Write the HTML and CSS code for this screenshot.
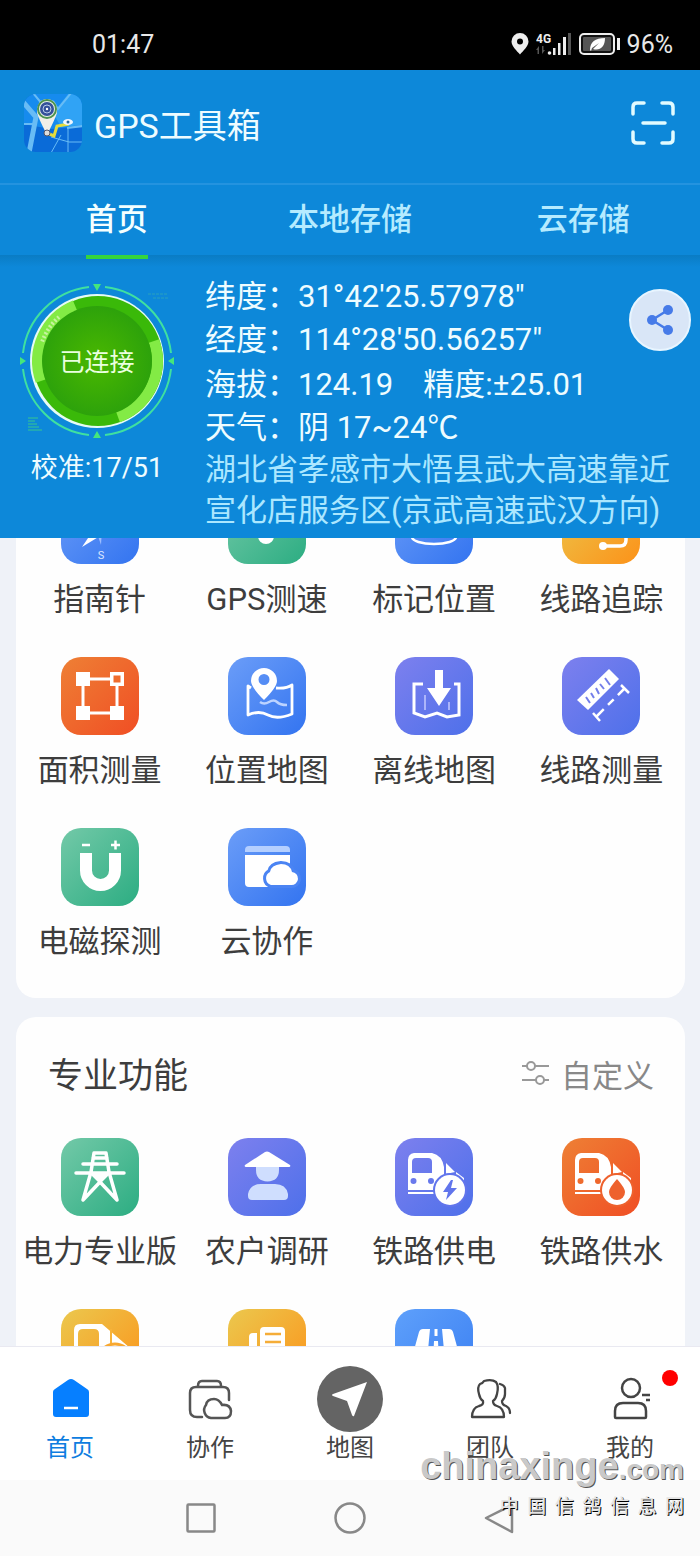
FILE: index.html
```html
<!DOCTYPE html>
<html lang="zh-CN">
<head>
<meta charset="utf-8">
<meta name="viewport" content="width=device-width, initial-scale=1">
<title>GPS工具箱</title>
<link rel="stylesheet" href="styles.css">
</head>
<body>
<div class="status">
  <time class="status-time">01:47</time>
  <div class="status-icons">
    <svg width="18" height="22" viewBox="0 0 18 22"><path fill="#eee" fill-rule="evenodd" d="M9 0a8.500 8.500 0 0 1 8.500 8.500C17.500 13 12 18 9 21.500 6 18 .5 13 .5 8.500A8.500 8.500 0 0 1 9 0zm0 5.500a3 3 0 1 0 0 6 3 3 0 0 0 0-6z"/></svg>
    <svg width="36" height="26" viewBox="0 0 36 26"><text class="net" x="0" y="12">4G</text><g fill="#555"><path d="M3 15v8H1.500v-4H0zM6 23v-8h1.500v4H9z"/><path d="M32 2h3v22h-3z"/></g><g fill="#eee"><circle cx="13.500" cy="22" r="1.800"/><path d="M17 17h2.500v7H17zM22 12h2.500v12H22zM27 6h3v18h-3z"/></g></svg>
    <svg width="41" height="22" viewBox="0 0 41 22"><rect x="1" y="1" width="34" height="20" rx="4" fill="#111" stroke="#eee" stroke-width="2"/><rect x="4" y="4" width="28" height="14" rx="1" fill="#555"/><path fill="#fff" d="M11 17c0-8 5-12 15-12 0 9-5 13-12 11l6-6-7 5-1 3z"/><path d="M38 5h3v12h-3z" fill="#eee"/></svg>
    <span>96%</span>
  </div>
</div>

<header class="top">
  <div class="title-bar">
    <svg class="logo" width="60" height="60" viewBox="0 0 60 60">
      <defs><clipPath id="logo-clip"><rect x="1" y="1" width="58" height="58" rx="12"/></clipPath></defs>
      <g clip-path="url(#logo-clip)">
        <path fill="#0a6bd8" d="M0 0h60v60H0z"/><path fill="#168bee" d="M0 0h60v33L28 36 0 31z"/><path fill="#30a3f5" d="M30 20 46 0h14v32l-22 2z"/>
        <g fill="none" stroke="#68bcf5"><path stroke-width="5" d="M0 9 13 24 6 60"/><path stroke-width="2" d="M10 0 20 12M30 8l5 8L48 0M0 31h13M44 35l16-2"/><path stroke-width="1" d="M45 35v25M38 42l-10 18M28 44l18 5 14 0"/></g>
        <path fill="none" stroke="#e5dc3c" stroke-width="3" d="M24 40l7 3 3-10 12-2"/>
        <ellipse cx="45" cy="29" rx="5" ry="3" fill="#eef6ff"/><circle cx="45" cy="29" r="1.500" fill="#2868a0"/>
        <path fill="#f0efe8" d="M14 20q0-14 10-14t10 14q-2 6-8 18h-4q-6-12-8-18z"/>
        <circle cx="24" cy="40" r="3" fill="#ddd" stroke="#556" stroke-width="1"/>
        <circle cx="24" cy="16" r="9" fill="#e7efe4" stroke="#4d9350" stroke-width="2"/><circle cx="24" cy="16" r="7" fill="#34519a"/><circle cx="24" cy="16" r="4" fill="none" stroke="#b8cbe9"/><circle cx="24" cy="16" r="1.200" fill="#fff"/>
      </g>
    </svg>
    <h1 class="app-name">GPS工具箱</h1>
    <button class="scan" aria-label="扫一扫"><svg width="44" height="44" viewBox="0 0 44 44" fill="none" stroke="#e2fbff" stroke-width="3.500" stroke-linecap="round" stroke-linejoin="round"><path d="M2 13V6q0-4 4-4h7M31 2h7q4 0 4 4v7M42 31v7q0 4-4 4h-7M13 42H6q-4 0-4-4v-7M12 22h22"/></svg></button>
  </div>
  <nav class="tabs">
    <a class="tab tab-on" href="#home">首页</a>
    <a class="tab" href="#local">本地存储</a>
    <a class="tab" href="#cloud">云存储</a>
  </nav>
  <section class="info">
    <div class="dial">
      <svg width="160" height="160" viewBox="0 0 160 160">
        <defs><radialGradient id="dial-fill"><stop offset="0" stop-color="#4ab800"/><stop offset="1" stop-color="#2da20b"/></radialGradient></defs>
        <g fill="none" stroke="#3fe0a0" stroke-width="2"><path d="M88 6A75 75 0 0 1 154 72M154 88A75 75 0 0 1 88 154M72 154A75 75 0 0 1 6 88M6 72A75 75 0 0 1 72 6"/></g>
        <path fill="#45e67c" d="M76 3h8l-4 7zM76 157h8l-4-7zM3 76v8l6-4zM157 76v8l-6-4z"/>
        <circle cx="80" cy="80" r="67" fill="#e6fbf5"/><circle cx="81" cy="80" r="65" fill="#3ab909"/>
        <g fill="none" stroke="#83eb45" stroke-width="11"><path d="M58 24.500A60 60 0 0 0 24 100"/><path d="M137 60A60 60 0 0 1 101 136"/></g>
        <path fill="none" stroke="#c7f3a0" stroke-width="4" stroke-dasharray="2 2" d="M42 36A60 60 0 0 0 25 61"/>
        <circle cx="80" cy="80" r="55" fill="url(#dial-fill)"/>
        <path stroke="#37c78f" d="M11 137h10M11 140h7M11 143h9M11 146h11M11 149h14" />
        <path stroke="#2ba1bd" stroke-dasharray="3 1" d="M131 13h20M136 17h15"/>
        <text class="dial-text" x="80" y="90" text-anchor="middle">已连接</text>
      </svg>
      <p class="calib">校准:17/51</p>
    </div>
    <div class="readings">
      <dl class="pair"><dt>纬度：</dt><dd>31°42′25.57978″</dd></dl>
      <dl class="pair"><dt>经度：</dt><dd>114°28′50.56257″</dd></dl>
      <dl class="pair pair-gap"><dt>海拔：</dt><dd>124.19</dd><dt class="second">精度:</dt><dd>±25.01</dd></dl>
      <dl class="pair"><dt>天气：</dt><dd>阴 17~24℃</dd></dl>
      <p class="address">湖北省孝感市大悟县武大高速靠近宣化店服务区(京武高速武汉方向)</p>
    </div>
    <button class="share" aria-label="分享"><svg width="28" height="30" viewBox="0 0 28 30" fill="#467be8"><path d="M22 5 6 15l16 10" fill="none" stroke="#467be8" stroke-width="2.500"/><circle cx="22" cy="5" r="5"/><circle cx="6" cy="15" r="5"/><circle cx="22" cy="25" r="5"/></svg></button>
  </section>
</header>

<main class="content">
  <section class="card card-scrolled">
    <div class="grid">
      <a class="tile" href="#compass"><svg class="ico blue" viewBox="0 0 78 78"><path fill="#fff" d="M21 61 50 18 39 50z"/><path fill="#9dbdff" d="M37 50l4-6-1 15z"/><text class="compass-s" x="40" y="73" text-anchor="middle">S</text></svg>指南针</a>
      <a class="tile" href="#speed"><svg class="ico green" viewBox="0 0 78 78"><circle cx="38" cy="50" r="8" fill="#fff"/></svg>GPS测速</a>
      <a class="tile" href="#mark"><svg class="ico blue" viewBox="0 0 78 78"><ellipse cx="39" cy="51" rx="22" ry="7" fill="none" stroke="#fff" stroke-width="2.500"/></svg>标记位置</a>
      <a class="tile" href="#track"><svg class="ico yellow" viewBox="0 0 78 78"><circle cx="41" cy="60" r="4" fill="#fff"/><path d="M41 60h17q6 0 6-6V40" fill="none" stroke="#fff" stroke-width="3.500"/></svg>线路追踪</a>

      <a class="tile" href="#area"><svg class="ico orange" viewBox="0 0 78 78"><path d="M22 22h34v34H22z" fill="none" stroke="#fff" stroke-width="3"/><path fill="#fff" d="M15 15h14v14H15zM15 49h14v14H15zM49 49h14v14H49zM49 15h14v14H49z"/><path fill="#ef6b2c" d="M52.500 18.500h7v7h-7z"/></svg>面积测量</a>
      <a class="tile" href="#map"><svg class="ico blue" viewBox="0 0 78 78"><path fill="none" stroke="#fff" stroke-width="2.800" stroke-linejoin="round" d="M23 31l-3-2v29q11-5 20 0t24-1V28q-6 4-16 3"/><path fill="#fff" fill-rule="evenodd" d="M36 11a13 13 0 0 1 13 13q0 6-13 19-13-13-13-19a13 13 0 0 1 13-13zm0 6a5.500 5.500 0 1 0 0 11 5.500 5.500 0 0 0 0-11z"/><path d="M32 45q4 3 9 0t8 0 10 3" fill="none" stroke="#bcd3ff" stroke-width="2.500"/></svg>位置地图</a>
      <a class="tile" href="#offline"><svg class="ico violet" viewBox="0 0 78 78"><path fill="none" stroke="#fff" stroke-width="3" d="M28 27h-9v29l11 4 12-4 10 4 12-2V27h-5"/><path fill="none" stroke="#c4caff" stroke-width="1.500" d="M30 38v15M54 45v8"/><path fill="#fff" d="M40 13h8v18h8L44 49 32 31h8z"/></svg>离线地图</a>
      <a class="tile" href="#route"><svg class="ico violet" viewBox="0 0 78 78"><path fill="#fff" d="M47 12l10 10-31 31-11-10z"/><path stroke="#747fea" stroke-width="2" d="M24 40l4 6M29 36l3 5M34 31l3 6M38 27l4 5M43 21l5 7"/><g stroke="#fff" stroke-width="2.500"><path stroke-dasharray="11 6 8 6" d="M34 60l28-28"/><path d="M31 56l7 8M59 28l8 8"/></g></svg>线路测量</a>

      <a class="tile" href="#magnet"><svg class="ico green" viewBox="0 0 78 78"><path fill="none" stroke="#fff" stroke-width="12" d="M25 25v17.500a14.500 14.500 0 0 0 29 0V25"/><path stroke="#fff" stroke-width="2.500" d="M21 17h8M50 17h9M54.500 12.500v9"/></svg>电磁探测</a>
      <a class="tile" href="#team-cloud"><svg class="ico blue" viewBox="0 0 78 78"><path fill="#b4cfff" d="M17 24v-2q0-4 4-4h37q4 0 4 4v2z"/><path fill="#fff" d="M17 27h45v28q0 4-4 4H21q-4 0-4-4z"/><path fill="#fff" stroke="#4b84f3" stroke-width="6" paint-order="stroke" d="M43 57a7 7 0 0 1-1-13q1-7 11-8 9 0 11 8a6.500 6.500 0 0 1-1 13z"/></svg>云协作</a>
    </div>
  </section>

  <section class="card">
    <div class="card-head">
      <h2 class="card-title">专业功能</h2>
      <button class="custom"><svg class="custom-ico" width="29" height="26" viewBox="0 0 29 26" fill="none" stroke="#999" stroke-width="2"><path d="M1 6h5M14 6h14M1 20h14M23 20h5"/><circle cx="10" cy="6" r="4"/><circle cx="19" cy="20" r="4"/></svg>自定义</button>
    </div>
    <div class="grid">
      <a class="tile" href="#power"><svg class="ico green" viewBox="0 0 78 78"><g fill="none" stroke="#fff" stroke-width="3.500" stroke-linecap="round" stroke-linejoin="round"><path d="M22 62 30 34l3-19h12l3 19 8 28-17-18zM32 20h14M22 26h34M15 35h48"/></g><path fill="#fff" d="M28 35h22L39 46z"/></svg>电力专业版</a>
      <a class="tile" href="#farmer"><svg class="ico violet" viewBox="0 0 78 78"><path fill="#cfdefe" d="M28 29h23v3q0 11-11.500 11.500Q28 43 28 32zM20 58v-2q2-10 13-10h14q11 0 13 10v2q0 4-4 4H24q-4 0-4-4z"/><path fill="#fff" d="M37 14q2-1 4 0l21 13q1 2-1 2H18q-2 0-1-2z"/></svg>农户调研</a>
      <a class="tile" href="#rail-power"><svg class="ico violet" viewBox="0 0 78 78"><path fill="#fff" fill-rule="evenodd" d="M13 52V22q0-6 6-7h18q10 2 12 14v23zM17 24v11h20V24q0-4-4-4H21q-4 0-4 4zM18.500 40a3 3 0 1 0 0 6 3 3 0 0 0 0-6zM36 40a3 3 0 1 0 0 6 3 3 0 0 0 0-6zM13 54h26v2H13zM51 25l9 9-9 2zM61 34l8 6v3l-8-6z"/><circle cx="55" cy="52" r="17" fill="#6175ec"/><circle cx="55" cy="52" r="15" fill="#fff"/><path fill="#6175ec" d="M56 42 48 54h5l-2 8 11-12h-6l2-8z"/></svg>铁路供电</a>
      <a class="tile" href="#rail-water"><svg class="ico orange" viewBox="0 0 78 78"><path fill="#fff" fill-rule="evenodd" d="M13 52V22q0-6 6-7h18q10 2 12 14v23zM17 24v11h20V24q0-4-4-4H21q-4 0-4 4zM18.500 40a3 3 0 1 0 0 6 3 3 0 0 0 0-6zM36 40a3 3 0 1 0 0 6 3 3 0 0 0 0-6zM13 54h26v2H13zM51 25l9 9-9 2zM61 34l8 6v3l-8-6z"/><circle cx="55" cy="52" r="17" fill="#ee612d"/><circle cx="55" cy="52" r="15" fill="#fff"/><path fill="#ee612d" d="M55 41q8 9 8 13a8 8 0 0 1-16 0q0-4 8-13z"/></svg>铁路供水</a>

      <a class="tile" href="#rail" aria-label="铁路"><svg class="ico yellow" viewBox="0 0 78 78"><path fill="#fff" fill-rule="evenodd" d="M13 52V21q0-6 6-6h22l28 24v13zM17 25v27h21V25q0-5-5-5H22q-5 0-5 5z"/><path stroke="#f8b33a" stroke-width="2" d="M50 20v18"/><circle cx="54" cy="52" r="17" fill="#fff" stroke="#f8a830" stroke-width="3"/></svg></a>
      <a class="tile" href="#docs" aria-label="文档"><svg class="ico yellow" viewBox="0 0 78 78"><path fill="#fff" d="M21 52V28q0-4 4-4h4v28zM32 52V22q0-4 4-4h17q4 0 4 4v30z"/><path stroke="#f5ad38" stroke-width="2.500" d="M37 25h16M37 33h16"/></svg></a>
      <a class="tile" href="#road" aria-label="公路"><svg class="ico sky" viewBox="0 0 78 78"><path fill="#fff" d="M28 20h7l-3 32H16l8-29q1-3 4-3zM47 20h7q3 0 4 3l8 29H50zM39.500 20h3v7h-3zM39 32h4l1 20h-6z"/></svg></a>
    </div>
  </section>
</main>

<nav class="bottom">
  <a class="nav nav-on" href="#home"><span class="nav-ico"><svg width="44" height="44" viewBox="0 0 44 44"><path fill="#067fff" d="M20 3q3-2 6 0l13 9q2 1 2 3v22q0 3-3 3H8q-3 0-3-3V15q0-2 2-3z"/><path stroke="#fff" stroke-width="2.500" d="M16 31h14"/></svg></span>首页</a>
  <a class="nav" href="#work"><span class="nav-ico"><svg width="46" height="44" viewBox="0 0 46 44" fill="none" stroke="#555" stroke-width="2.500" stroke-linecap="round"><path d="M11 9q0-5 4-5h15q4 0 4 5"/><path d="M42 23v-7q0-6-6-6H9q-6 0-6 6v17q0 7 7 7h5"/><path d="M24 41a8 8 0 0 1-5-13q1-6 8-6 5 0 8 6 8-1 9 6 0 7-6 7z"/></svg></span>协作</a>
  <a class="nav" href="#map"><span class="nav-ico"><svg width="66" height="66" viewBox="0 0 66 66"><circle cx="33" cy="33" r="33" fill="#646464"/><path fill="#fff" d="M50 16 37 50q-1 1-2-1l-5-14-14-5q-2-1 0-2z"/></svg></span>地图</a>
  <a class="nav" href="#team"><span class="nav-ico"><svg width="44" height="44" viewBox="0 0 44 44" fill="none" stroke="#444" stroke-width="2.300" stroke-linejoin="round" stroke-linecap="round"><path d="M11 17q-2-7 1-10 3-1 4-3 8-2 12 1 3 4 1 12-1 5-4 7 0 4 4 5 7 2 7 11H4q0-9 7-11 5-1 4-5-3-2-4-7z"/><path d="M32 7q4 1 5 4v6q0 4-3 7 0 4 4 5 4 2 4 7"/></svg></span>团队</a>
  <a class="nav" href="#me"><span class="nav-ico"><svg width="44" height="44" viewBox="0 0 44 44" fill="none" stroke="#444" stroke-width="2.500" stroke-linejoin="round"><circle cx="23" cy="11" r="9"/><path d="M7 40v-6q0-8 8-8h15q8 0 8 8v6q0 1-1 1H8q-1 0-1-1zM34 18h8M38 23h4"/></svg></span>我的<i class="dot"></i></a>
</nav>
<div class="system">
  <button aria-label="最近任务"><svg width="30" height="30" viewBox="0 0 30 30" fill="none" stroke="#888" stroke-width="2.500"><rect x="1.500" y="1.500" width="27" height="27" rx="1"/></svg></button>
  <button aria-label="主屏幕"><svg width="32" height="32" viewBox="0 0 32 32" fill="none" stroke="#888" stroke-width="2.500"><circle cx="16" cy="16" r="14.500"/></svg></button>
  <button aria-label="返回"><svg width="30" height="32" viewBox="0 0 30 32" fill="none" stroke="#888" stroke-width="2.500" stroke-linejoin="round"><path d="M28 3v27L2 16z"/></svg></button>
</div>
<div class="mark">
  <p class="mark-url">chinaxinge<small>.com</small></p>
  <p class="mark-name">中  国  信  鸽  信  息  网</p>
</div>
</body>
</html>
```
FILE: styles.css
```css
* { box-sizing: border-box; }
body {
  margin: 0;
  height: 100vh;
  display: flex;
  flex-direction: column;
  position: relative;
  overflow: hidden;
  background: #eff2f8;
  color: #3d3d3d;
  font-family: Roboto, "Noto Sans CJK SC", sans-serif;
}
h1, h2, p, dl, dd { margin: 0; font-weight: 400; }
a { color: inherit; text-decoration: none; }
button { padding: 0; border: 0; background: none; color: inherit; font: inherit; }
svg { display: block; flex: none; }

.status {
  flex: none;
  display: flex;
  justify-content: space-between;
  align-items: center;
  height: 70px;
  padding: 18px 27px 0 92px;
  background: #000;
  color: #e8e8e8;
  font-size: 25px;
}
.status-icons { display: flex; align-items: center; gap: 7px; }
.net { fill: #eee; font-size: 12px; font-weight: 700; }

.top { flex: none; background: #0d88d9; color: #eefcff; }
.title-bar {
  display: flex;
  align-items: center;
  height: 115px;
  padding: 0 25px 8px 23px;
  border-bottom: 2px solid #2493df;
}
.app-name { margin-left: 11px; padding-top: 6px; font-size: 34px; line-height: 48px; }
.scan { margin-left: auto; }
.tabs { display: grid; grid-template-columns: repeat(3, 1fr); justify-items: center; }
.tab {
  padding: 11px 0;
  color: #b5ebff;
  font-size: 31px;
  font-weight: 500;
  line-height: 48px;
}
.tab-on { position: relative; z-index: 1; color: #f4ffff; box-shadow: 0 4px #35d43d; }
.info {
  position: relative;
  display: grid;
  grid-template-columns: 194px 1fr;
  gap: 11px;
  padding: 20px 8px 7px 0;
  background: linear-gradient(#0a7cc4, #0d88d9 12px);
}
.dial { display: flex; flex-direction: column; align-items: center; padding-top: 6px; }
.dial-text { fill: #eaffdf; font-size: 25px; }
.calib { margin-top: 7px; font-size: 27px; line-height: 40px; }
.readings { font-size: 31px; }
.pair { display: flex; line-height: 43px; white-space: nowrap; }
.pair-gap { margin-top: 2px; }
.second { margin-left: 30px; }
.address { color: #abe7ff; line-height: 41px; }
.share {
  position: absolute;
  top: 34px;
  right: 9px;
  display: grid;
  place-items: center;
  width: 62px;
  height: 62px;
  border: 2px solid #e8f5ff;
  border-radius: 50%;
  background: #d9e6f7;
}

.content { flex: 1 1 0; min-height: 0; overflow: hidden; padding: 0 15px 0 16px; }
.card { margin-bottom: 19px; padding-bottom: 33px; border-radius: 20px; background: #fefefe; }
.card-scrolled { margin-top: -52px; }
.card-head {
  display: flex;
  justify-content: space-between;
  align-items: center;
  padding: 32px 31px 33px 32px;
}
.card-title { font-size: 35px; line-height: 56px; }
.custom { display: flex; align-items: center; gap: 11px; color: #888; font-size: 31px; line-height: 46px; }
.custom-ico { margin-bottom: 8px; }
.grid { display: grid; grid-template-columns: repeat(4, 1fr); row-gap: 34px; }
.tile {
  display: flex;
  flex-direction: column;
  align-items: center;
  gap: 13px;
  font-size: 31px;
  line-height: 46px;
  white-space: nowrap;
}
.ico { width: 78px; height: 78px; border-radius: 20px; }
.blue { background: linear-gradient(135deg, #6b9df8, #3374f0); }
.sky { background: linear-gradient(135deg, #5ea0fb, #3b7ff2); }
.green { background: linear-gradient(135deg, #73c9a8, #2cad82); }
.violet { background: linear-gradient(135deg, #7d80ee, #4e70ea); }
.orange { background: linear-gradient(135deg, #ee8035, #f04e24); }
.yellow { background: linear-gradient(135deg, #ebc84e, #fc9219); }
.compass-s { fill: #dce7ff; font-size: 11px; }

.bottom {
  flex: none;
  display: grid;
  grid-template-columns: repeat(5, 1fr);
  padding: 19px 0 16px;
  border-top: 1px solid #e9e9f1;
  background: #fff;
}
.nav {
  position: relative;
  display: flex;
  flex-direction: column;
  align-items: center;
  color: #444;
  font-size: 24px;
  line-height: 32px;
}
.nav-on { color: #0e7de0; }
.nav-ico { display: grid; place-items: center; height: 66px; }
.dot {
  position: absolute;
  top: 4px;
  right: 22px;
  width: 16px;
  height: 16px;
  border-radius: 50%;
  background: #f00;
}
.system {
  flex: none;
  display: flex;
  justify-content: center;
  align-items: center;
  gap: 118px;
  height: 76px;
  background: #fafafa;
}
.mark {
  position: absolute;
  right: 16px;
  bottom: 38px;
  text-align: right;
  color: #c9c9c9;
  text-shadow: 1px 1px #555;
}
.mark-url { font: 700 38px/44px "Liberation Sans", sans-serif; }
.mark-url small { font-size: 28px; }
.mark-name { color: #e4e4e4; font: 500 19px/26px "Noto Sans CJK SC", sans-serif; white-space: pre; text-shadow: 1px 1px #000; }
```
